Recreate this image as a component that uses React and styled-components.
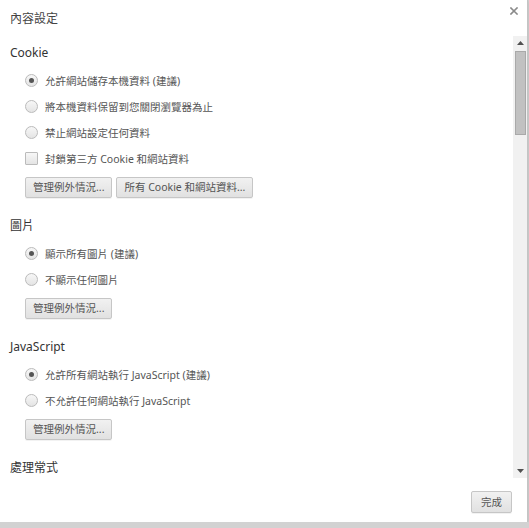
import React from "react";
import styled, { createGlobalStyle } from "styled-components";

const GlobalStyle = createGlobalStyle`
  html, body {
    margin: 0;
    padding: 0;
    background: #d2d2d2;
  }
  body {
    font-family: "Noto Sans", "Noto Sans CJK TC", sans-serif;
    color: #333;
  }
`;

const Dialog = styled.div`
  width: 527px;
  height: 522px;
  background: #fff;
  border-right: 1px solid #c4c4c4;
  box-shadow: 0 1px 3px rgba(0, 0, 0, 0.15);
  display: flex;
  flex-direction: column;
`;

const Header = styled.div`
  height: 36px;
  display: flex;
  justify-content: space-between;
  align-items: flex-start;
  flex-shrink: 0;
`;

const Title = styled.h1`
  margin: 0;
  padding-left: 10px;
  font-size: 12px;
  font-weight: normal;
  line-height: 37px;
  color: #444;
`;

const CloseButton = styled.button`
  border: 0;
  background: none;
  padding: 0;
  margin: 7px 9px 0 0;
  width: 8px;
  height: 8px;
  display: flex;
  cursor: pointer;
`;

const Body = styled.div`
  height: 442px;
  display: flex;
  flex-shrink: 0;
`;

const Content = styled.div`
  flex: 1;
  overflow: hidden;
  padding: 7px 0 0 10px;
`;

const Section = styled.section`
  margin-bottom: 18px;
`;

const Heading = styled.h2`
  margin: 0 0 4px;
  font-size: 12px;
  font-weight: normal;
  line-height: 20px;
  color: #333;
`;

const Options = styled.div`
  margin-left: 15px;
`;

const Row = styled.label`
  height: 26px;
  display: flex;
  align-items: center;
  gap: 7px;
  font-size: 10.5px;
  color: #555;
`;

const Radio = styled.span`
  box-sizing: border-box;
  width: 13px;
  height: 13px;
  border-radius: 50%;
  border: 1px solid #bbb;
  background: linear-gradient(#f7f7f7, #e4e4e4);
  display: flex;
  align-items: center;
  justify-content: center;
  flex-shrink: 0;
  &::after {
    content: "";
    width: 5px;
    height: 5px;
    border-radius: 50%;
    background: ${({ checked }) => (checked ? "#555" : "transparent")};
  }
`;

const Checkbox = styled.span`
  box-sizing: border-box;
  width: 13px;
  height: 13px;
  border-radius: 1px;
  border: 1px solid #bbb;
  background: linear-gradient(#f7f7f7, #e4e4e4);
  flex-shrink: 0;
`;

const ButtonRow = styled.div`
  display: flex;
  gap: 4px;
  margin-top: 6px;
`;

const Button = styled.button`
  height: 21px;
  padding: 0 7px;
  border: 1px solid #c6c6c6;
  border-radius: 2px;
  background: linear-gradient(#f1f1f1, #e1e1e1);
  box-shadow: 0 1px 0 rgba(0, 0, 0, 0.05);
  font-family: inherit;
  font-size: 10.5px;
  color: #555;
  line-height: 19px;
  cursor: pointer;
`;

const Scrollbar = styled.div`
  width: 14px;
  background: #f1f1f1;
  display: flex;
  flex-direction: column;
  flex-shrink: 0;
`;

const Arrow = styled.div`
  height: 14px;
  display: flex;
  align-items: center;
  justify-content: center;
  margin-top: ${({ down }) => (down ? "auto" : "0")};
`;

const Thumb = styled.div`
  box-sizing: border-box;
  height: 84px;
  margin: 1px 1px 0 2px;
  background: #c1c1c1;
  border: 1px solid #a9a9a9;
`;

const Footer = styled.div`
  flex: 1;
  display: flex;
  justify-content: flex-end;
  align-items: flex-start;
  padding: 13px 15px 0 0;
`;

const DoneButton = styled(Button)`
  height: 22px;
  padding: 0 9px;
`;

const Tri = ({ down }) => (
  <svg width="7" height="4" viewBox="0 0 7 4">
    <polygon
      points={down ? "0,0 7,0 3.5,4" : "0,4 7,4 3.5,0"}
      fill="#505050"
    />
  </svg>
);

const sections = [
  {
    title: "Cookie",
    options: [
      { label: "允許網站儲存本機資料 (建議)", checked: true },
      { label: "將本機資料保留到您關閉瀏覽器為止" },
      { label: "禁止網站設定任何資料" },
      { label: "封鎖第三方 Cookie 和網站資料", box: true },
    ],
    buttons: ["管理例外情況...", "所有 Cookie 和網站資料..."],
  },
  {
    title: "圖片",
    options: [
      { label: "顯示所有圖片 (建議)", checked: true },
      { label: "不顯示任何圖片" },
    ],
    buttons: ["管理例外情況..."],
  },
  {
    title: "JavaScript",
    options: [
      { label: "允許所有網站執行 JavaScript (建議)", checked: true },
      { label: "不允許任何網站執行 JavaScript" },
    ],
    buttons: ["管理例外情況..."],
  },
  { title: "處理常式", options: [], buttons: [] },
];

export default function App() {
  return (
    <>
      <GlobalStyle />
      <Dialog>
        <Header>
          <Title>內容設定</Title>
          <CloseButton aria-label="關閉">
            <svg width="8" height="8" viewBox="0 0 8 8">
              <path
                d="M1 1 L7 7 M7 1 L1 7"
                stroke="#8a8a8a"
                strokeWidth="1.6"
                strokeLinecap="square"
              />
            </svg>
          </CloseButton>
        </Header>
        <Body>
          <Content>
            {sections.map((s) => (
              <Section key={s.title}>
                <Heading>{s.title}</Heading>
                {s.options.length > 0 && (
                  <Options>
                    {s.options.map((o) => (
                      <Row key={o.label}>
                        {o.box ? <Checkbox /> : <Radio checked={o.checked} />}
                        {o.label}
                      </Row>
                    ))}
                    <ButtonRow>
                      {s.buttons.map((b) => (
                        <Button key={b}>{b}</Button>
                      ))}
                    </ButtonRow>
                  </Options>
                )}
              </Section>
            ))}
          </Content>
          <Scrollbar>
            <Arrow>
              <Tri />
            </Arrow>
            <Thumb />
            <Arrow down>
              <Tri down />
            </Arrow>
          </Scrollbar>
        </Body>
        <Footer>
          <DoneButton>完成</DoneButton>
        </Footer>
      </Dialog>
    </>
  );
}
